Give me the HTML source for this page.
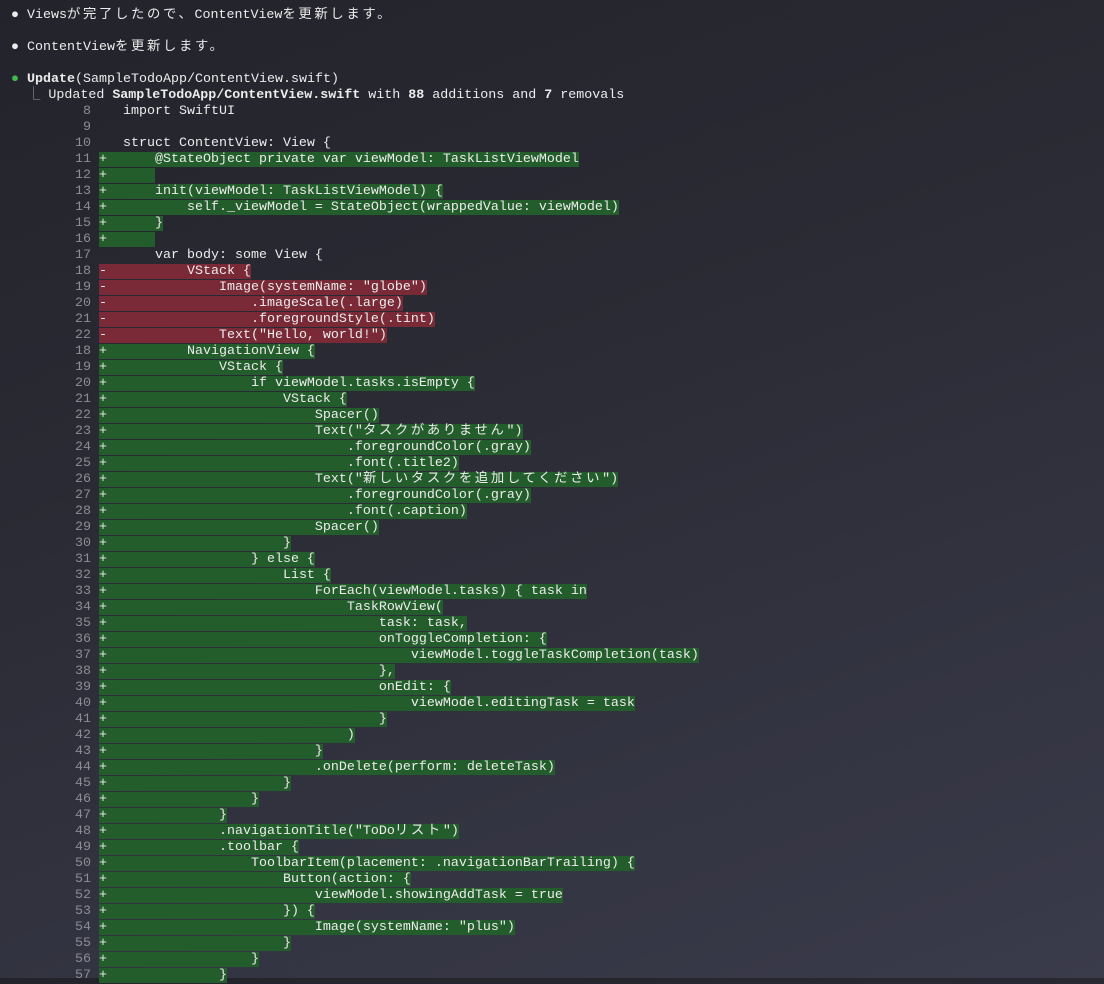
<!DOCTYPE html>
<html><head><meta charset="utf-8"><style>
html,body{margin:0;padding:0}
body{width:1104px;height:978px;overflow:hidden;background:linear-gradient(160deg,#23232b 0%,#2b2b35 40%,#3a3b4b 100%);font-family:"Liberation Mono","Noto Sans CJK JP",monospace;font-size:13.33px;color:#ececec}
.w{position:absolute;left:11px;top:8px}
.r{height:16px;line-height:16px;white-space:pre}
.n{color:#8c8c94}
.a{background:#235d2b}
.d{background:#7a2a37}
b{font-weight:bold}
.j{letter-spacing:2.67px}
.g{color:#3fb950}
.m{color:#9a9aa2}
</style></head><body><div class="w">
<div class="r">● Views<span class="j">が完了したので、</span>ContentView<span class="j">を更新します。</span></div>
<div class="r"> </div>
<div class="r">● ContentView<span class="j">を更新します。</span></div>
<div class="r"> </div>
<div class="r"><span class="g">●</span> <b>Update</b>(SampleTodoApp/ContentView.swift)</div>
<div class="r">  <span class="m">⎿</span> Updated <b>SampleTodoApp/ContentView.swift</b> with <b>88</b> additions and <b>7</b> removals</div>
<div class="r"><span class="n">         8</span>    import SwiftUI</div>
<div class="r"><span class="n">         9</span> </div>
<div class="r"><span class="n">        10</span>    struct ContentView: View {</div>
<div class="r"><span class="n">        11</span> <span class="a">+      @StateObject private var viewModel: TaskListViewModel</span></div>
<div class="r"><span class="n">        12</span> <span class="a">+      </span></div>
<div class="r"><span class="n">        13</span> <span class="a">+      init(viewModel: TaskListViewModel) {</span></div>
<div class="r"><span class="n">        14</span> <span class="a">+          self._viewModel = StateObject(wrappedValue: viewModel)</span></div>
<div class="r"><span class="n">        15</span> <span class="a">+      }</span></div>
<div class="r"><span class="n">        16</span> <span class="a">+      </span></div>
<div class="r"><span class="n">        17</span>        var body: some View {</div>
<div class="r"><span class="n">        18</span> <span class="d">-          VStack {</span></div>
<div class="r"><span class="n">        19</span> <span class="d">-              Image(systemName: "globe")</span></div>
<div class="r"><span class="n">        20</span> <span class="d">-                  .imageScale(.large)</span></div>
<div class="r"><span class="n">        21</span> <span class="d">-                  .foregroundStyle(.tint)</span></div>
<div class="r"><span class="n">        22</span> <span class="d">-              Text("Hello, world!")</span></div>
<div class="r"><span class="n">        18</span> <span class="a">+          NavigationView {</span></div>
<div class="r"><span class="n">        19</span> <span class="a">+              VStack {</span></div>
<div class="r"><span class="n">        20</span> <span class="a">+                  if viewModel.tasks.isEmpty {</span></div>
<div class="r"><span class="n">        21</span> <span class="a">+                      VStack {</span></div>
<div class="r"><span class="n">        22</span> <span class="a">+                          Spacer()</span></div>
<div class="r"><span class="n">        23</span> <span class="a">+                          Text("<span class="j">タスクがありません</span>")</span></div>
<div class="r"><span class="n">        24</span> <span class="a">+                              .foregroundColor(.gray)</span></div>
<div class="r"><span class="n">        25</span> <span class="a">+                              .font(.title2)</span></div>
<div class="r"><span class="n">        26</span> <span class="a">+                          Text("<span class="j">新しいタスクを追加してください</span>")</span></div>
<div class="r"><span class="n">        27</span> <span class="a">+                              .foregroundColor(.gray)</span></div>
<div class="r"><span class="n">        28</span> <span class="a">+                              .font(.caption)</span></div>
<div class="r"><span class="n">        29</span> <span class="a">+                          Spacer()</span></div>
<div class="r"><span class="n">        30</span> <span class="a">+                      }</span></div>
<div class="r"><span class="n">        31</span> <span class="a">+                  } else {</span></div>
<div class="r"><span class="n">        32</span> <span class="a">+                      List {</span></div>
<div class="r"><span class="n">        33</span> <span class="a">+                          ForEach(viewModel.tasks) { task in</span></div>
<div class="r"><span class="n">        34</span> <span class="a">+                              TaskRowView(</span></div>
<div class="r"><span class="n">        35</span> <span class="a">+                                  task: task,</span></div>
<div class="r"><span class="n">        36</span> <span class="a">+                                  onToggleCompletion: {</span></div>
<div class="r"><span class="n">        37</span> <span class="a">+                                      viewModel.toggleTaskCompletion(task)</span></div>
<div class="r"><span class="n">        38</span> <span class="a">+                                  },</span></div>
<div class="r"><span class="n">        39</span> <span class="a">+                                  onEdit: {</span></div>
<div class="r"><span class="n">        40</span> <span class="a">+                                      viewModel.editingTask = task</span></div>
<div class="r"><span class="n">        41</span> <span class="a">+                                  }</span></div>
<div class="r"><span class="n">        42</span> <span class="a">+                              )</span></div>
<div class="r"><span class="n">        43</span> <span class="a">+                          }</span></div>
<div class="r"><span class="n">        44</span> <span class="a">+                          .onDelete(perform: deleteTask)</span></div>
<div class="r"><span class="n">        45</span> <span class="a">+                      }</span></div>
<div class="r"><span class="n">        46</span> <span class="a">+                  }</span></div>
<div class="r"><span class="n">        47</span> <span class="a">+              }</span></div>
<div class="r"><span class="n">        48</span> <span class="a">+              .navigationTitle("ToDo<span class="j">リスト</span>")</span></div>
<div class="r"><span class="n">        49</span> <span class="a">+              .toolbar {</span></div>
<div class="r"><span class="n">        50</span> <span class="a">+                  ToolbarItem(placement: .navigationBarTrailing) {</span></div>
<div class="r"><span class="n">        51</span> <span class="a">+                      Button(action: {</span></div>
<div class="r"><span class="n">        52</span> <span class="a">+                          viewModel.showingAddTask = true</span></div>
<div class="r"><span class="n">        53</span> <span class="a">+                      }) {</span></div>
<div class="r"><span class="n">        54</span> <span class="a">+                          Image(systemName: "plus")</span></div>
<div class="r"><span class="n">        55</span> <span class="a">+                      }</span></div>
<div class="r"><span class="n">        56</span> <span class="a">+                  }</span></div>
<div class="r"><span class="n">        57</span> <span class="a">+              }</span></div>
</div></body></html>
